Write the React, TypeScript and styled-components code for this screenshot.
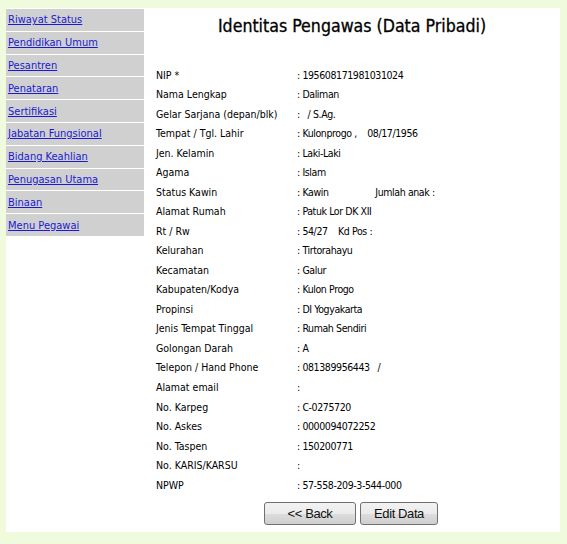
import * as React from 'react';
import styled, { createGlobalStyle } from 'styled-components';

const GlobalStyle = createGlobalStyle`
  html, body {
    margin: 0;
    padding: 0;
    background: #f0fadc;
  }
`;

const Page = styled.div`
  width: 567px;
  height: 544px;
  padding: 8px 7px 12px 6px;
  box-sizing: border-box;
`;

const Frame = styled.div`
  display: flex;
  height: 524px;
  background: #ffffff;
`;

const Menu = styled.nav`
  display: flex;
  flex-direction: column;
  gap: 1px;
  width: 138px;
  padding-top: 1px;
`;

const MenuCell = styled.div`
  display: flex;
  align-items: center;
  height: 21.8px;
  padding-left: 2px;
  background: #d0d0d0;
`;

const MenuLink = styled.a`
  font-family: 'DejaVu Sans Condensed', 'DejaVu Sans', sans-serif;
  font-size: 11px;
  color: #1a1ad0;
  text-decoration: underline;
  cursor: pointer;
`;

const Content = styled.main`
  flex: 1;
  display: flex;
  flex-direction: column;
  padding-left: 12px;
`;

const Title = styled.h1`
  margin: 8px 0 0;
  text-align: center;
  font-family: 'DejaVu Sans Condensed', 'DejaVu Sans', sans-serif;
  font-size: 17.6px;
  font-weight: normal;
  color: #000;
  padding-right: 12px;
  -webkit-text-stroke: 0.3px #000;
`;

const DataTable = styled.div`
  display: grid;
  grid-template-columns: 141px 1fr;
  grid-auto-rows: 19.52px;
  margin-top: 29px;
  font-family: 'DejaVu Sans Condensed', 'DejaVu Sans', sans-serif;
  font-size: 10.5px;
  color: #000;
  align-items: center;
`;

const Label = styled.div`
  white-space: nowrap;
`;

const Value = styled.div`
  white-space: pre;
  letter-spacing: -0.4px;
`;

const Actions = styled.div`
  display: flex;
  gap: 4px;
  margin: 8px 0 0 108px;
`;

const Button = styled.button<{ $w: number }>`
  width: ${p => p.$w}px;
  height: 23px;
  border: 1px solid #707070;
  border-radius: 3px;
  background: linear-gradient(#f2f2f2 0%, #ebebeb 50%, #dddddd 51%, #cfcfcf 100%);
  font-family: 'Liberation Sans', Arial, sans-serif;
  font-size: 13px;
  letter-spacing: -0.4px;
  color: #111;
  padding: 0;
`;

const menuItems = [
  'Riwayat Status',
  'Pendidikan Umum',
  'Pesantren',
  'Penataran',
  'Sertifikasi',
  'Jabatan Fungsional',
  'Bidang Keahlian',
  'Penugasan Utama',
  'Binaan',
  'Menu Pegawai',
];

const rows: [string, string][] = [
  ['NIP *', '195608171981031024'],
  ['Nama Lengkap', 'Daliman'],
  ['Gelar Sarjana (depan/blk)', '  / S.Ag.'],
  ['Tempat / Tgl. Lahir', 'Kulonprogo ,    08/17/1956'],
  ['Jen. Kelamin', 'Laki-Laki'],
  ['Agama', 'Islam'],
  ['Status Kawin', 'Kawin                  Jumlah anak :'],
  ['Alamat Rumah', 'Patuk Lor DK XII'],
  ['Rt / Rw', '54/27    Kd Pos :'],
  ['Kelurahan', 'Tirtorahayu'],
  ['Kecamatan', 'Galur'],
  ['Kabupaten/Kodya', 'Kulon Progo'],
  ['Propinsi', 'DI Yogyakarta'],
  ['Jenis Tempat Tinggal', 'Rumah Sendiri'],
  ['Golongan Darah', 'A'],
  ['Telepon / Hand Phone', '081389956443   /'],
  ['Alamat email', ''],
  ['No. Karpeg', 'C-0275720'],
  ['No. Askes', '0000094072252'],
  ['No. Taspen', '150200771'],
  ['No. KARIS/KARSU', ''],
  ['NPWP', '57-558-209-3-544-000'],
];

export default function App() {
  return (
    <Page>
      <GlobalStyle />
      <Frame>
        <Menu>
          {menuItems.map(m => (
            <MenuCell key={m}>
              <MenuLink>{m}</MenuLink>
            </MenuCell>
          ))}
        </Menu>
        <Content>
          <Title>Identitas Pengawas (Data Pribadi)</Title>
          <DataTable>
            {rows.map(([l, v]) => (
              <React.Fragment key={l}>
                <Label>{l}</Label>
                <Value>{': ' + v}</Value>
              </React.Fragment>
            ))}
          </DataTable>
          <Actions>
            <Button $w={92}>&lt;&lt; Back</Button>
            <Button $w={78}>Edit Data</Button>
          </Actions>
        </Content>
      </Frame>
    </Page>
  );
}
